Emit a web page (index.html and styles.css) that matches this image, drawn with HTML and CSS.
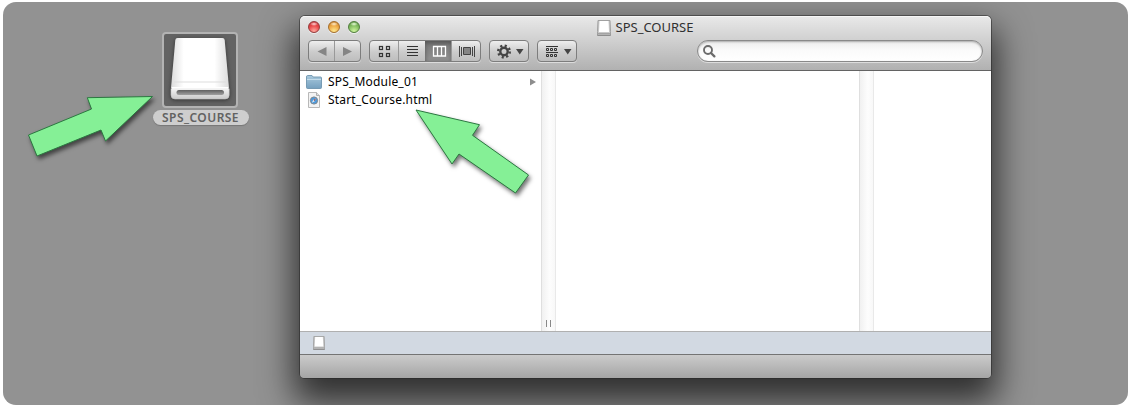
FILE: index.html
```
<!DOCTYPE html>
<html lang="en">
<head>
<meta charset="utf-8">
<title>SPS_COURSE</title>
<link rel="stylesheet" href="styles.css">
</head>
<body>
<svg class="defs" width="0" height="0" aria-hidden="true">
  <defs>
    <linearGradient id="plate" x1="0" y1="0" x2="1" y2="0"><stop offset="0" stop-color="#dcdcdc"/><stop offset=".22" stop-color="#fff"/><stop offset=".75" stop-color="#fff"/><stop offset="1" stop-color="#dcdcdc"/></linearGradient>
    <linearGradient id="lip" x1="0" y1="0" x2="0" y2="1"><stop offset="0" stop-color="#f8f8f8"/><stop offset="1" stop-color="#cacaca"/></linearGradient>
    <linearGradient id="slot" x1="0" y1="0" x2="0" y2="1"><stop offset="0" stop-color="#606060"/><stop offset="1" stop-color="#a0a0a0"/></linearGradient>
    <linearGradient id="folder" x1="0" y1="0" x2="0" y2="1"><stop offset="0" stop-color="#a9c9dd"/><stop offset="1" stop-color="#75a0bf"/></linearGradient>
    <symbol id="drive" viewBox="0 0 14 16" preserveAspectRatio="none">
      <path d="M1 .5h12l.5 11v4H.5v-4z" fill="#c9c9c9" stroke="#a0a0a0"/>
      <path d="M2.500 1h9l.5 11H2z" fill="#fff"/>
      <path d="M1 13.500h12" stroke="#a4a4a4"/><path d="M.5 15.200h13" stroke="#858585"/>
    </symbol>
  </defs>
</svg>
<main class="desktop">
  <div class="volume">
    <div class="volume-icon">
      <svg width="76" height="76" viewBox="0 0 76 76">
        <g class="drive-shadow">
          <path d="M15.500 6h45q2 0 2.200 2l4.300 48H9L13.300 8q.2-2 2.200-2z" fill="url(#plate)"/>
          <path d="M10 55.500h56l1.200 1.500v6q0 4-4 4H13q-4 0-4-4v-6z" fill="url(#lip)" stroke="#c4c4c4" stroke-width=".6"/>
          <path d="M12 50h52" stroke="#ddd"/>
          <path d="M10 55.500h56" stroke="#fff"/>
        </g>
        <rect x="14.500" y="58" width="47.500" height="5" rx="2.500" fill="url(#slot)"/>
      </svg>
    </div>
    <div class="volume-name"><span>SPS_COURSE</span></div>
  </div>

  <section class="window">
    <header class="chrome">
      <div class="titlebar">
        <div class="lights"><i class="light red"></i><i class="light amber"></i><i class="light green"></i></div>
        <div class="title"><svg width="14" height="16"><use href="#drive"/></svg><span>SPS_COURSE</span></div>
      </div>
      <div class="toolbar">
        <div class="buttons nav">
          <div class="seg"><svg width="26" height="20"><path d="M17.500 6v9L8.500 10.500z" fill="#858585"/></svg></div>
          <div class="seg"><svg width="25" height="20"><path d="M8 6v9L17 10.500z" fill="#858585"/></svg></div>
        </div>
        <div class="buttons views">
          <div class="seg"><svg width="29" height="20"><g fill="none" stroke="#333" stroke-width="1.200"><rect x="9.500" y="5.500" width="3" height="3"/><rect x="16.500" y="5.500" width="3" height="3"/><rect x="9.500" y="12.500" width="3" height="3"/><rect x="16.500" y="12.500" width="3" height="3"/></g></svg></div>
          <div class="seg"><svg width="26" height="20"><path d="M8 5.500h11M8 8.500h11M8 11.500h11M8 14.500h11" stroke="#333" stroke-width="1.100"/></svg></div>
          <div class="seg selected"><svg width="27" height="20"><path d="M8.500 5.500h12v9.500h-12zM12.500 5v10M16.500 5v10" fill="none" stroke="#fff" stroke-width="1.300"/></svg></div>
          <div class="seg"><svg width="28" height="20"><path d="M11.500 6.500h7v7h-7z" fill="#858585" stroke="#444"/><path d="M7.500 5v11M9.500 6v9M20.500 6v9M22.500 5v11" stroke="#444" fill="none"/></svg></div>
        </div>
        <div class="buttons menu">
          <svg width="38" height="20"><g fill="none" stroke="#444"><circle cx="14" cy="10.500" r="3.700" stroke-width="2.400"/><circle cx="14" cy="10.500" r="5.800" stroke-width="2.400" stroke-dasharray="2.100 2.455"/></g><path d="M26 8h7.500l-3.750 5.500z" fill="#444"/></svg>
        </div>
        <div class="buttons menu">
          <svg width="38" height="20"><path d="M8 5.500h12M8 11.500h12" stroke="#333"/><path d="M8.500 7.500h2v2h-2zM12.500 7.500h2v2h-2zM16.500 7.500h2v2h-2zM8.500 13.500h2v2h-2zM12.500 13.500h2v2h-2zM16.500 13.500h2v2h-2z" fill="none" stroke="#333"/><path d="M26 8h7.500l-3.750 5.500z" fill="#444"/></svg>
        </div>
        <div class="search"><svg width="14" height="14" viewBox="0 0 14 14"><circle cx="5" cy="5" r="4" fill="none" stroke="#6c6c6c" stroke-width="1.900"/><path d="M8 8l3.400 3.400" stroke="#6c6c6c" stroke-width="2.300" stroke-linecap="round"/></svg></div>
      </div>
    </header>
    <div class="browser">
      <div class="column first">
        <div class="row">
          <svg width="16" height="14" viewBox="0 0 16 14"><path d="M.5 2q0-1.500 1-1.500h4.500l1.200 1.500h7.300q1 0 1 1v9.500q0 1-1 1h-13q-1 0-1-1z" fill="url(#folder)" stroke="#6e94ae" stroke-width=".9"/><path d="M1 4.500h14" stroke="#c4dcea"/></svg>
          <span class="name folder-name">SPS_Module_01</span>
          <svg class="disclosure" width="6" height="8"><path d="M0 .5v7L6 4z" fill="#8d8d8d"/></svg>
        </div>
        <div class="row">
          <svg width="16" height="16" viewBox="0 0 16 16"><path d="M2.500.5h8l3 3v12h-11z" fill="#f3f3f3" stroke="#b8b8b8"/><path d="M10.500.5v3h3" fill="#ddd" stroke="#b0b0b0"/><circle cx="8" cy="8.500" r="3.600" fill="#4b9ade" stroke="#7c8790"/><path d="M10.200 6.300L8.700 9.200 5.800 10.700 7.300 7.800z" fill="#e8eef2"/><path d="M10.200 6.300L8.700 9.200 7.300 7.800z" fill="#8a5a68"/></svg>
          <span class="name file-name">Start_Course.html</span>
        </div>
      </div>
      <div class="gutter"><i class="grip"></i></div>
      <div class="column second"></div>
      <div class="gutter"></div>
      <div class="column"></div>
    </div>
    <div class="pathbar"><svg width="12" height="14"><use href="#drive"/></svg></div>
    <footer class="statusbar"></footer>
  </section>

  <svg class="arrows" width="1125" height="403" viewBox="3 2 1125 403">
    <path d="M28.500 135L91.500 109 87.300 97.700 152.500 96.500 105.500 141 101 130 37 156z"/>
    <path d="M416 110L479.500 124.700 472.500 135.300 528.500 175 515.500 193 459 154 452 164z"/>
  </svg>
</main>
</body>
</html>
```

FILE: styles.css
```
* { box-sizing: border-box; }
body { margin: 0; height: 410px; padding: 2px 5px 5px 3px; background: #fff; overflow: hidden; font-family: "Noto Sans", "Open Sans", sans-serif; font-size: 12px; }
svg { display: block; flex: none; }
.defs { position: absolute; }
.desktop { position: relative; width: 1125px; height: 403px; border-radius: 13px; background: #929292; overflow: hidden; }

.volume { position: absolute; left: 149px; top: 30px; width: 96px; display: flex; flex-direction: column; align-items: center; gap: 2px; }
.volume-icon { width: 76px; height: 76px; border: 2px solid #b3b3b3; border-radius: 4px; background: #636363; }
.volume-icon svg { margin: -2px; }
.drive-shadow { filter: drop-shadow(0 1px 2px #333); }
.volume-name { width: 96px; height: 15px; margin-left: 1px; border-radius: 8px; background: #cecece; color: #626262; font-weight: 600; line-height: 15px; text-align: center; box-shadow: 0 1px 1px #777; white-space: nowrap; letter-spacing: .45px; }

.window { position: absolute; left: 297px; top: 14px; width: 691px; height: 362px; display: flex; flex-direction: column; border-radius: 5px; box-shadow: 0 0 0 1px rgba(40,40,40,.55), 0 18px 34px 6px rgba(0,0,0,.68); }
.chrome { height: 55px; border-radius: 5px 5px 0 0; border-bottom: 1px solid #636363; background: linear-gradient(#e9e9e9, #d0d0d0 45%, #b1b1b1); box-shadow: inset 0 1px #f6f6f6; }
.titlebar { position: relative; height: 24px; display: flex; align-items: center; justify-content: center; }
.lights { position: absolute; left: 8px; top: 5px; display: flex; gap: 8px; }
.light { width: 12px; height: 12px; border-radius: 50%; border: 1px solid; box-shadow: 0 1px #ededed; }
.red { border-color: #943c3c; background: radial-gradient(ellipse 4px 2px at 50% 20%, #ffdada, transparent), radial-gradient(circle at 50% 90%, #ffaaa0, #e84748 55%, #bc3037); }
.amber { border-color: #a46e2d; background: radial-gradient(ellipse 4px 2px at 50% 20%, #fff0d0, transparent), radial-gradient(circle at 50% 90%, #ffe98f, #eda844 55%, #bd7424); }
.green { border-color: #527e3e; background: radial-gradient(ellipse 4px 2px at 50% 20%, #edffdd, transparent), radial-gradient(circle at 50% 90%, #d0f6a0, #83bd60 55%, #4d8b39); }
.title { display: flex; align-items: center; gap: 5px; color: #303030; }
.title span { display: block; width: 79px; padding-bottom: 2px; font-size: 13px; line-height: 18px; white-space: nowrap; }

.toolbar { display: flex; gap: 8px; padding: 0 8px; height: 22px; }
.buttons { display: flex; height: 22px; border: 1px solid #7d7d7d; border-radius: 4px; background: linear-gradient(#eee, #cbcbcb 55%, #bebebe); box-shadow: 0 1px #dcdcdc; overflow: hidden; }
.nav { width: 53px; }
.views { width: 112px; }
.menu { width: 40px; }
.seg + .seg { box-shadow: -1px 0 #999; }
.seg + .seg.selected { background: linear-gradient(#777, #919191); box-shadow: inset 0 2px 4px #555; }
.search { flex: none; width: 286px; height: 22px; margin-left: auto; padding: 4px 5px; border: 1px solid #898989; border-radius: 11px; background: linear-gradient(#ececec, #fafafa 45%, #fff); box-shadow: 0 1px #ddd, inset 0 1px 2px #aaa; }

.browser { height: 260px; display: flex; background: #fff; }
.column { flex: 1; }
.first { flex: none; width: 241px; padding: 2px 5px 0 6px; }
.second { flex: none; width: 303px; }
.row { height: 18px; display: flex; align-items: center; gap: 6px; }
.name { font-size: 12px; line-height: 18px; color: #000; white-space: nowrap; letter-spacing: .18px; }
.disclosure { margin-left: auto; }
.gutter { flex: none; width: 15px; height: 260px; display: flex; align-items: flex-end; border-left: 1px solid #dfdfdf; border-right: 1px solid #e9e9e9; background: linear-gradient(90deg, #f1f1f1, #fdfdfd 60%, #f8f8f8); }
.grip { width: 5px; height: 7px; margin: 0 0 4px 4px; border-left: 1px solid #888; border-right: 1px solid #888; }
.pathbar { height: 24px; padding: 4px 13px 0; border-top: 1px solid #b0b0b0; border-bottom: 1px solid #747474; background: #d2d9e2; }
.statusbar { height: 23px; border-radius: 0 0 4px 4px; background: linear-gradient(#cbcbcb, #a5a5a5); }

.arrows { position: absolute; left: 0; top: 0; fill: #85f096; stroke: #2b7740; stroke-width: 1; filter: drop-shadow(2px 3px 2px rgba(0,0,0,.55)); }
```
